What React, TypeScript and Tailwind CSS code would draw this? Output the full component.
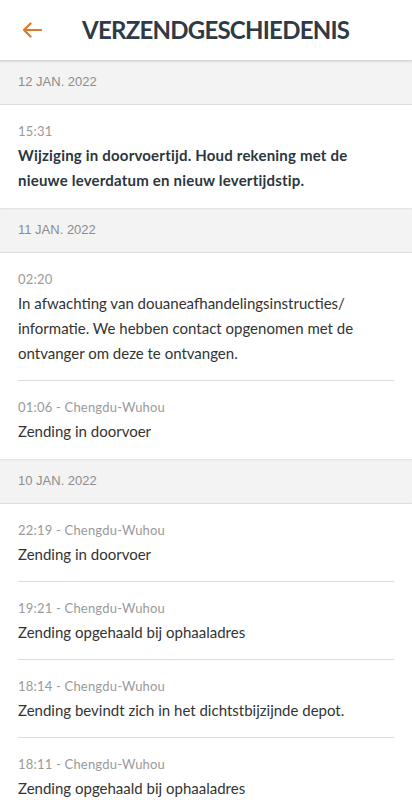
import React from "react";

type Entry = { time: string; text: string; bold?: boolean };
type Group = { date: string; entries: Entry[] };

const groups: Group[] = [
  {
    date: "12 JAN. 2022",
    entries: [
      {
        time: "15:31",
        text: "Wijziging in doorvoertijd. Houd rekening met de nieuwe leverdatum en nieuw levertijdstip.",
        bold: true,
      },
    ],
  },
  {
    date: "11 JAN. 2022",
    entries: [
      {
        time: "02:20",
        text: "In afwachting van douaneafhandelingsinstructies/ informatie. We hebben contact opgenomen met de ontvanger om deze te ontvangen.",
      },
      { time: "01:06 - Chengdu-Wuhou", text: "Zending in doorvoer" },
    ],
  },
  {
    date: "10 JAN. 2022",
    entries: [
      { time: "22:19 - Chengdu-Wuhou", text: "Zending in doorvoer" },
      { time: "19:21 - Chengdu-Wuhou", text: "Zending opgehaald bij ophaaladres" },
      { time: "18:14 - Chengdu-Wuhou", text: "Zending bevindt zich in het dichtstbijzijnde depot." },
      { time: "18:11 - Chengdu-Wuhou", text: "Zending opgehaald bij ophaaladres" },
    ],
  },
];

export default function App() {
  return (
    <div className="w-[412px] min-h-[800px] bg-white font-['Lato',sans-serif] overflow-hidden">
      <header className="relative z-10 flex h-[60px] items-center bg-white shadow-[0_1px_3px_rgba(0,0,0,0.12)]">
        <div className="flex w-[82px] items-center pl-[22px]">
          <svg width="20" height="16" viewBox="0 0 20 16" fill="none">
            <path
              d="M19 8H2M8.5 1.5L2 8l6.5 6.5"
              stroke="#E2782A"
              strokeWidth="2.2"
              strokeLinecap="round"
              strokeLinejoin="round"
            />
          </svg>
        </div>
        <h1 className="text-[24px] font-bold tracking-[-0.75px] text-[#2e3a46] leading-none">
          VERZENDGESCHIEDENIS
        </h1>
      </header>
      {groups.map((g) => (
        <section key={g.date}>
          <div className="flex h-[45px] items-center border-b border-[#dedede] bg-[#f3f3f3] px-[18px] shadow-[inset_0_2px_2px_-1px_rgba(0,0,0,0.08)]">
            <span className="font-['Liberation_Sans',sans-serif] text-[13px] text-[#8c8c8c]">{g.date}</span>
          </div>
          <div className="px-[18px]">
            {g.entries.map((e, i) => (
              <div
                key={e.time}
                className={
                  "pt-[16px] pb-[14px] border-b " +
                  (i < g.entries.length - 1 ? "border-[#dcdcdc]" : "border-transparent")
                }
              >
                <div className="text-[13px] leading-[20px] text-[#9a9a9a] tracking-[0.2px]">{e.time}</div>
                <div
                  className={
                    "mt-[2px] text-[15px] leading-[25px] " +
                    (e.bold ? "font-bold tracking-[0.2px] text-[#2b3640]" : "text-[#333333]")
                  }
                >
                  {e.text}
                </div>
              </div>
            ))}
          </div>
        </section>
      ))}
    </div>
  );
}
